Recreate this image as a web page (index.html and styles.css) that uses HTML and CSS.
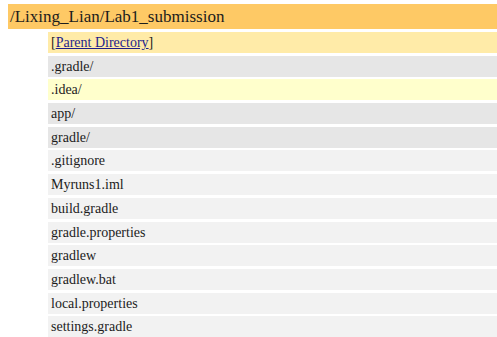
FILE: index.html
```html
<!DOCTYPE html>
<html>
<head>
<meta charset="utf-8">
<link rel="stylesheet" href="styles.css">
</head>
<body>
<div class="page">
  <div class="header">/Lixing_Lian/Lab1_submission</div>
  <div class="list">
    <div class="row parent">[<a href="#">Parent Directory</a>]</div>
    <div class="row dir">.gradle/</div>
    <div class="row idea">.idea/</div>
    <div class="row dir">app/</div>
    <div class="row dir">gradle/</div>
    <div class="row file">.gitignore</div>
    <div class="row file">Myruns1.iml</div>
    <div class="row file">build.gradle</div>
    <div class="row file">gradle.properties</div>
    <div class="row file">gradlew</div>
    <div class="row file">gradlew.bat</div>
    <div class="row file">local.properties</div>
    <div class="row file">settings.gradle</div>
  </div>
</div>
</body>
</html>
```
FILE: styles.css
```css
html, body {
  margin: 0;
  padding: 0;
  background: #ffffff;
  overflow: hidden;
}
.page {
  padding: 4px 0 0 8px;
  font-family: "Liberation Serif", "Times New Roman", serif;
  color: #1c1c1c;
}
.header {
  height: 25px;
  line-height: 25px;
  font-size: 17px;
  padding-left: 2px;
  background: #fec965;
}
.list {
  margin: 3px 0 0 40px;
  display: flex;
  flex-direction: column;
  gap: 2.7px;
}
.row {
  height: 21px;
  line-height: 21px;
  font-size: 14px;
  padding-left: 3px;
  white-space: nowrap;
}
.row a {
  color: #1e1e8c;
  text-decoration: underline;
}
.parent { background: #ffeba8; }
.dir { background: #e6e6e6; }
.idea { background: #ffffcc; }
.file { background: #f2f2f2; }
```
